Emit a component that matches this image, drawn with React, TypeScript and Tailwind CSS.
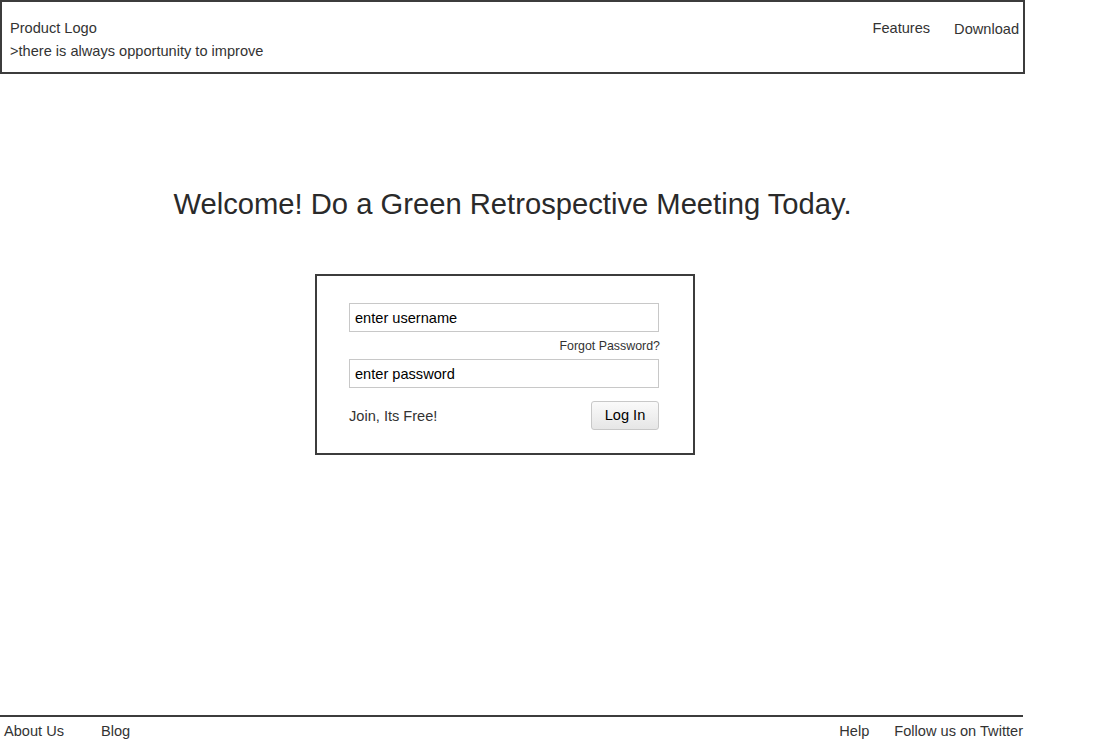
import React from 'react';

const font = { fontFamily: '"Liberation Sans", Arial, sans-serif' };

export default function App() {
  return (
    <div className="w-[1093px] h-[745px] bg-white text-[#333] flex flex-col" style={font}>
      <header className="w-[1025px] h-[74px] border-2 border-[#3c3c3c] flex justify-between">
        <div className="pl-[8px] pt-[15px] text-[14.6px] leading-[23px]">
          <div>Product Logo</div>
          <div>&gt;there is always opportunity to improve</div>
        </div>
        <nav className="flex items-start pt-[16px] pr-[4px] text-[14.6px]">
          <a className="mr-[24px] leading-[20px]">Features</a>
          <a className="mt-[1px] leading-[20px]">Download</a>
        </nav>
      </header>

      <main className="flex-1 w-[1025px]">
        <h1 className="mt-[114px] text-center text-[29.2px] leading-[32px] text-[#2a2a2a]">
          Welcome! Do a Green Retrospective Meeting Today.
        </h1>
        <div className="ml-[315px] mt-[54px] w-[380px] h-[181px] border-2 border-[#3c3c3c] pt-[27px] pl-[32px]">
          <div className="w-[310px] flex flex-col">
            <input
              className="h-[29px] border border-[#c8c8c8] px-[5px] text-[14.6px] text-black outline-none placeholder:text-black"
              placeholder="enter username"
              style={font}
            />
            <a className="self-end mr-[-1px] mt-[7px] text-[12.4px] leading-[14px] text-[#333]">Forgot Password?</a>
            <input
              className="mt-[6px] h-[29px] border border-[#c8c8c8] px-[5px] text-[14.6px] text-black outline-none placeholder:text-black"
              placeholder="enter password"
              type="text"
              style={font}
            />
            <div className="mt-[13px] flex items-center justify-between">
              <span className="text-[14.6px] mt-[2px]">Join, Its Free!</span>
              <button
                className="w-[68px] h-[29px] rounded-[3px] border border-[#c8c8c8] bg-gradient-to-b from-[#fafafa] to-[#e6e6e6] text-[14.6px] text-black"
                style={font}
              >
                Log In
              </button>
            </div>
          </div>
        </div>
      </main>

      <footer className="w-[1023px] border-t-2 border-[#3c3c3c] flex justify-between items-center h-[30px] pt-[2px] text-[14.6px]">
        <div className="flex pl-[4px]">
          <a>About Us</a>
          <a className="ml-[37px]">Blog</a>
        </div>
        <div className="flex">
          <a>Help</a>
          <a className="ml-[25px]">Follow us on Twitter</a>
        </div>
      </footer>
    </div>
  );
}
